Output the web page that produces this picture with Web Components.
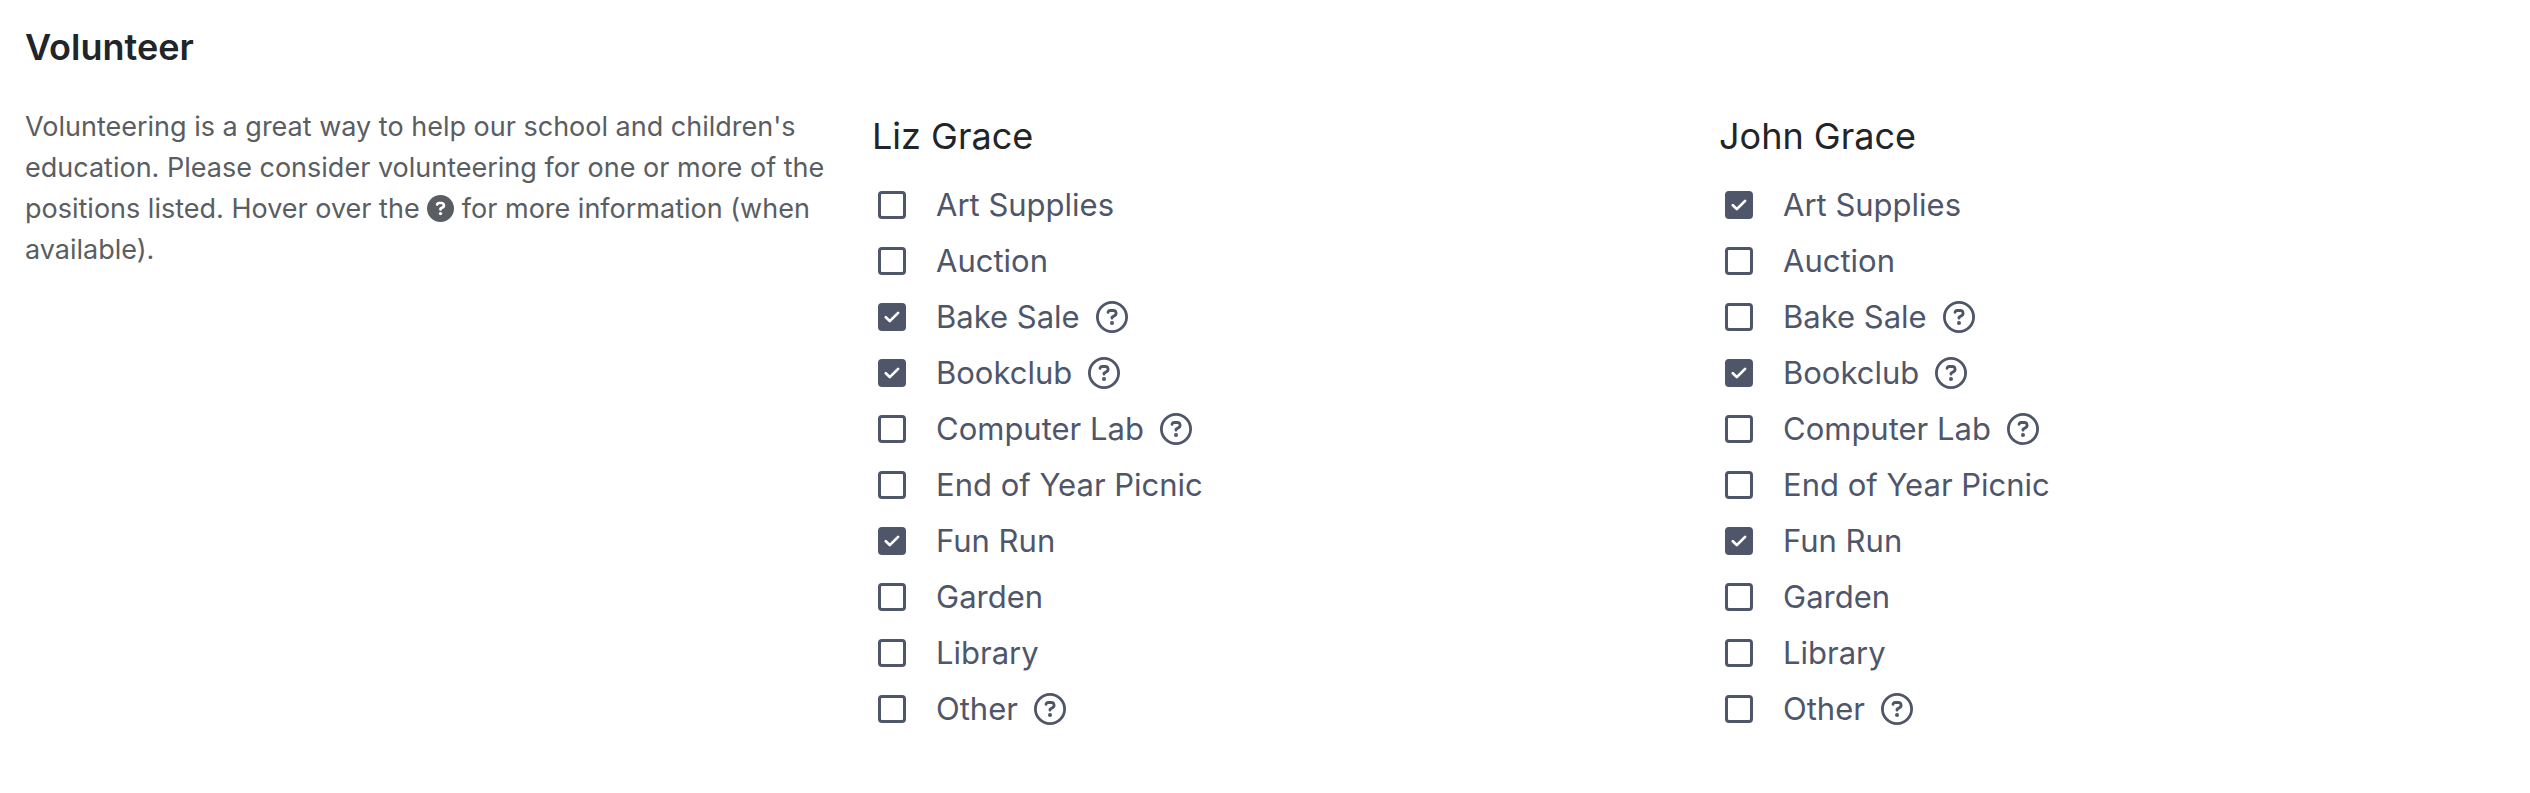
<!DOCTYPE html>
<html lang="en">
<head>
<meta charset="utf-8">
<meta name="viewport" content="width=device-width, initial-scale=1">
<title>Volunteer</title>
<style>
  body { margin: 0; background: #fff; color: #212529; font-family: Inter, "Liberation Sans", sans-serif; }
</style>
</head>
<body>
<volunteer-section>
  <span slot="title">Volunteer</span>
  <volunteer-intro slot="intro">Volunteering is a great way to help our school and children's education. Please consider volunteering for one or more of the positions listed. Hover over the <help-icon solid></help-icon> for more information (when available).</volunteer-intro>
  <volunteer-list name="Liz Grace" checked="Bake Sale,Bookclub,Fun Run"></volunteer-list>
  <volunteer-list name="John Grace" checked="Art Supplies,Bookclub,Fun Run"></volunteer-list>
</volunteer-section>

<script>
class HelpIcon extends HTMLElement {
  constructor() {
    super();
    const solid = this.hasAttribute('solid');
    this.attachShadow({ mode: 'open' }).innerHTML = `
      <style>
        :host { display: inline-block; width: 32px; height: 32px; }
        :host([solid]) { width: 27px; height: 27px; vertical-align: -4px; }
        svg { display: block; width: 100%; height: 100%; }
      </style>
      <svg viewBox="0 0 32 32" fill="none" aria-hidden="true">
        ${solid
          ? '<circle cx="16" cy="16" r="16" fill="currentColor"/>'
          : '<circle cx="16" cy="16" r="14.6" stroke="currentColor" stroke-width="2.8"/>'}
        <g stroke="${solid ? '#fff' : 'currentColor'}" stroke-width="${solid ? 3.2 : 2.8}" stroke-linecap="round" stroke-linejoin="round">
          <path d="M12 11.3l.1-.4a2.1 2.1 0 0 1 2-1.4h3.4a2.7 2.7 0 0 1 1.3 5L16 16.2v1"/>
        </g>
        <circle cx="16" cy="22" r="2" fill="${solid ? '#fff' : 'currentColor'}"/>
      </svg>`;
  }
}
customElements.define('help-icon', HelpIcon);

class VolunteerIntro extends HTMLElement {
  constructor() {
    super();
    this.attachShadow({ mode: 'open' }).innerHTML = `
      <style>
        :host { display: block; color: #5a5d61; font-size: 27px; line-height: 41px; }
        p { margin: 0; }
      </style>
      <p><slot></slot></p>`;
  }
}
customElements.define('volunteer-intro', VolunteerIntro);

class VolunteerOption extends HTMLElement {
  connectedCallback() {
    if (this.shadowRoot) return;
    const label = this.getAttribute('label');
    this.attachShadow({ mode: 'open' }).innerHTML = `
      <style>
        :host { display: flex; align-items: center; height: 56px; padding-left: 6px; color: #4f566a; font-size: 31px; }
        input {
          appearance: none; box-sizing: border-box; flex: none; width: 28px; height: 28px; margin: 0;
          border: 3px solid currentColor; border-radius: 4px; color: inherit;
        }
        input:checked {
          background: #4f566a url("data:image/svg+xml,%3Csvg xmlns='http://www.w3.org/2000/svg' viewBox='0 0 28 28'%3E%3Cpath d='M7.8 14.2l4 3.9 8.3-8.2' fill='none' stroke='%23fff' stroke-width='2.7' stroke-linecap='round' stroke-linejoin='round'/%3E%3C/svg%3E") border-box center / 28px 28px no-repeat;
        }
        label { padding-left: 30px; line-height: 40px; }
        button { display: flex; margin: 0 0 0 16px; padding: 0; border: 0; background: none; color: inherit; }
      </style>
      <input type="checkbox" id="option" ${this.hasAttribute('checked') ? 'checked' : ''}>
      <label for="option">${label}</label>
      ${this.hasAttribute('help') ? `<button type="button" aria-label="About ${label}"><help-icon></help-icon></button>` : ''}`;
  }
}
customElements.define('volunteer-option', VolunteerOption);

const POSITIONS = [
  ['Art Supplies'], ['Auction'], ['Bake Sale', true], ['Bookclub', true], ['Computer Lab', true],
  ['End of Year Picnic'], ['Fun Run'], ['Garden'], ['Library'], ['Other', true]
];

class VolunteerList extends HTMLElement {
  connectedCallback() {
    if (this.shadowRoot) return;
    const chosen = this.getAttribute('checked').split(',');
    this.attachShadow({ mode: 'open' }).innerHTML = `
      <style>
        :host { display: block; padding-top: 5px; }
        h3 { margin: 0 0 16px; font-size: 36px; font-weight: 400; line-height: 50px; }
      </style>
      <h3>${this.getAttribute('name')}</h3>
      ${POSITIONS.map(([label, help]) =>
        `<volunteer-option label="${label}"${help ? ' help' : ''}${chosen.includes(label) ? ' checked' : ''}></volunteer-option>`).join('')}`;
  }
}
customElements.define('volunteer-list', VolunteerList);

class VolunteerSection extends HTMLElement {
  constructor() {
    super();
    this.attachShadow({ mode: 'open' }).innerHTML = `
      <style>
        :host { display: block; padding: 24px 0 24px 25px; }
        h2 { margin: 0 0 36px; font-size: 36px; font-weight: 600; line-height: 46px; }
        .columns { display: grid; grid-template-columns: repeat(3, minmax(0, 1fr)); gap: 36px; align-items: start; }
      </style>
      <h2><slot name="title"></slot></h2>
      <div class="columns"><slot name="intro"></slot><slot></slot></div>`;
  }
}
customElements.define('volunteer-section', VolunteerSection);
</script>
</body>
</html>
